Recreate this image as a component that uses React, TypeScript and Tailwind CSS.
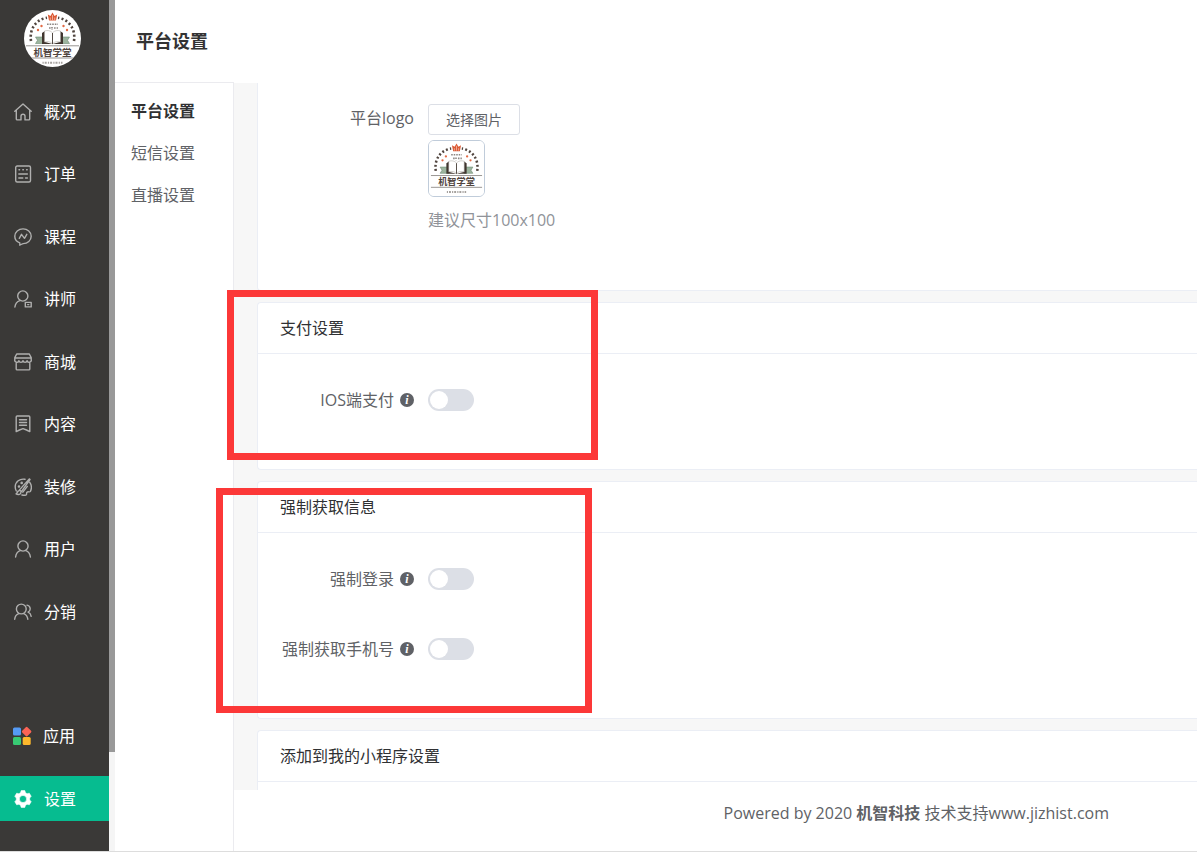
import React, { useState } from "react";

interface NavItem {
  label: string;
  icon: React.ReactNode;
  className?: string;
}

const LineIcon: React.FC<{ children: React.ReactNode }> = ({ children }) => (
  <svg
    viewBox="0 0 18 18"
    className="size-[18px] shrink-0"
    fill="none"
    stroke="#b0b0af"
    strokeWidth="1.4"
    strokeLinecap="round"
    strokeLinejoin="round"
    aria-hidden="true"
  >
    {children}
  </svg>
);

const navItems: NavItem[] = [
  {
    label: "概况",
    icon: (
      <LineIcon>
        <path d="M.8 8.2 9 .9l8.2 7.300M2.300 7.300v8.600c0 .6.4 1 1 1h3.700v-3.600a2 2 0 0 1 4 0v3.600h3.700c.6 0 1-.4 1-1V7.300" />
      </LineIcon>
    ),
  },
  {
    label: "订单",
    icon: (
      <LineIcon>
        <rect x="1.700" y="1" width="14.800" height="16" rx="1.500" />
        <path d="M5 4.800h.6M8.800 4.800h.6M12.600 4.800h.6M4.800 9h8.600M4.800 13h4M11.500 13h1.900" />
      </LineIcon>
    ),
  },
  {
    label: "课程",
    icon: (
      <LineIcon>
        <path d="M5.800 17.200v-2.300C2.800 13.800.8 11.300.8 8.300.8 4.200 4.500.9 9 .9s8.200 3.300 8.200 7.400-3.600 7.300-8 7.300c-.9 0-1.800 1-3.400 1.600Z" />
        <path d="m5.300 10.300 2.200-4 3 4 2.300-4" />
      </LineIcon>
    ),
  },
  {
    label: "讲师",
    icon: (
      <LineIcon>
        <circle cx="8.800" cy="6" r="5.100" />
        <path d="M.9 17c.4-3.200 2.200-5.400 5-6.300" />
        <rect x="11.300" y="12.400" width="5.900" height="4.500" />
        <path d="M13.700 14.600h1.100" />
      </LineIcon>
    ),
  },
  {
    label: "商城",
    icon: (
      <LineIcon>
        <path d="M2.700 1h12.600l1.900 3.600v2.100a2.100 2.100 0 0 1-4.100 1 2.100 2.100 0 0 1-4.100 0 2.100 2.100 0 0 1-4.100 0 2.100 2.100 0 0 1-4.100-1V4.600L2.700 1ZM1 5h16M2.200 10.500v5.400c0 .6.4 1 1 1h11.600c.6 0 1-.4 1-1v-5.400" />
      </LineIcon>
    ),
  },
  {
    label: "内容",
    icon: (
      <LineIcon>
        <path d="M3.200 1h11.600c.6 0 1 .4 1 1v14.600L12.500 15 9 13.600 5.500 15l-3.300 1.600V2c0-.6.4-1 1-1Z" />
        <path d="M5.500 4.700h7M5.500 7.500h7M5.500 10.300h7" />
      </LineIcon>
    ),
  },
  {
    label: "装修",
    icon: (
      <LineIcon>
        <path d="M11 1.300C5.800.2 1.300 3.900 1.200 8.800c0 1.700.4 3 1.100 4.200M15.600 4.200c2.200 3 2 6.700.8 9.200-.8 1.200-2.200-.2-3.300.7-1.300 1 .4 2.500-1.200 3-1.300.3-2.600.2-4-.1" />
        <path d="m15.300.9-9.800 11 1.900 1.700L16 1.500l-.7-.6ZM5 12.700c-1.800.2-1.200 2.200-2.900 3.200 2.100 1.300 5.100.6 4.800-2M8.900 14.200l4.400-5.800" />
        <circle cx="5" cy="8.500" r=".6" />
        <circle cx="7.700" cy="4.900" r=".6" />
      </LineIcon>
    ),
  },
  {
    label: "用户",
    icon: (
      <LineIcon>
        <circle cx="9" cy="6" r="5.100" />
        <path d="M1.600 17c.4-3.200 2-5.400 4.600-6.300M11.800 10.700c2.600.9 4.200 3.100 4.600 6.300" />
      </LineIcon>
    ),
  },
  {
    label: "分销",
    icon: (
      <LineIcon>
        <circle cx="7.300" cy="6" r="4.900" />
        <path d="M.7 16.200c.3-2.800 1.700-4.600 4-5.500M9.800 10.700c2.300.9 3.600 2.700 4 5.500M13 2.100c3.600.6 4.300 5.300 1.100 7 1.700.7 2.700 2 3.100 4.200" />
      </LineIcon>
    ),
  },
  {
    label: "应用",
    className: "mt-[62px]",
    icon: (
      <svg viewBox="0 0 18 18" className="-ml-px size-[18px] shrink-0 overflow-visible" aria-hidden="true">
        <rect x="0" y="0.500" width="8" height="8" rx="1.500" fill="#559bf5" />
        <rect x="10" y="0.900" width="7.400" height="7.400" rx="1.200" fill="#fb6355" transform="rotate(45 13.700 4.500)" />
        <rect x="0" y="10" width="8" height="8" rx="1.500" fill="#38ca73" />
        <rect x="9.700" y="10" width="8" height="8" rx="1.500" fill="#fcb82c" />
      </svg>
    ),
  },
  {
    label: "设置",
    icon: (
      <svg viewBox="0 0 18 18" className="size-[18px] shrink-0" aria-hidden="true">
        <path
          fill="#fff"
          fillRule="evenodd"
          d="M7.200.6h3.600l.7 2.200 1.600.9 2.200-.5 1.900 3.100L15.700 8v2l1.500 1.700-1.900 3.100-2.200-.5-1.600.9-.7 2.200H7.200l-.7-2.200-1.600-.9-2.200.5-1.900-3.100L2.300 10V8L.8 6.300l1.900-3.100 2.200.5 1.600-.9L7.200.6ZM9 5.400a3.600 3.600 0 1 0 0 7.200 3.600 3.600 0 0 0 0-7.200Z"
          stroke="#fff"
          strokeWidth=".6"
          strokeLinejoin="round"
        />
      </svg>
    ),
  },
];

const Logo = () => (
  <svg viewBox="0 0 57 57" className="block size-full" role="img" aria-label="机智学堂">
    <rect width="57" height="57" fill="#fff" />
    <path d="m23.800 4.500 2.700 1.500 2-3.500 2 3.500 2.700-1.500-1.200 6h-7l-1.200-6Z" fill="#dc5a35" />
    <path d="M28.500 5v5M26.300 7.500v2.500M30.700 7.500v2.500" stroke="#fff" strokeWidth=".5" />
    <path
      d="M7 31C5 17 14 9 23 7.800M50 31C52 17 43 9 34 7.800"
      fill="none"
      stroke="#50443e"
      strokeWidth="2.600"
      strokeDasharray="2 2.300"
    />
    <g fill="#e26a45">
      <circle cx="17.500" cy="16" r="1.200" />
      <circle cx="14" cy="20" r="1.200" />
      <circle cx="39.500" cy="16" r="1.200" />
      <circle cx="43" cy="20" r="1.200" />
    </g>
    <path d="M23 14.300h11M25 18h2M28 17v3M30 18h4" stroke="#8a8582" strokeWidth="1.600" strokeDasharray="1.600 1" />
    <path d="M11.500 27h9v6.500h-9l2-3.200-2-3.300ZM45.500 27h-9v6.500h9l-2-3.200 2-3.300Z" fill="#9db59f" stroke="#6d8a72" strokeWidth=".6" />
    <path d="M18 34V23l3-2v11l7.500 2 7.500-2V21l3 2v11H18Z" fill="#40362f" />
    <path d="M20.500 21c3-1 6-.5 8 1.800 2-2.300 5-2.800 8-1.800v11c-3-1-6-.5-8 1.800-2-2.300-5-2.800-8-1.800V21Z" fill="#fff" stroke="#a8a29d" strokeWidth=".5" />
    <path d="M28.500 23v11" stroke="#40362f" strokeWidth=".9" />
    <path d="M2 35.800h53M2 48h53" stroke="#8b8784" strokeWidth=".9" />
    <text x="28.500" y="45.500" textAnchor="middle" fontSize="9.500" fontWeight="700" fill="#51453f">
      机智学堂
    </text>
    <path d="M18.500 52.800h20" stroke="#a5a19e" strokeWidth="2" strokeDasharray="1.200 1 2 1.200" />
  </svg>
);

const InfoIcon = () => (
  <span className="flex size-3.5 shrink-0 items-center justify-center rounded-full bg-[#5f6166] font-['Liberation_Serif',serif] text-xs leading-none font-bold text-white italic">
    i
  </span>
);

const SwitchRow: React.FC<{ id: string; label: string }> = ({ id, label }) => {
  const [checked, setChecked] = useState(false);
  return (
    <div className="flex h-[70px] items-center gap-3.5">
      <label htmlFor={id} className="flex w-[156px] items-center justify-end gap-1.5 whitespace-nowrap">
        {label}
        <InfoIcon />
      </label>
      <input
        id={id}
        type="checkbox"
        role="switch"
        checked={checked}
        onChange={(e) => setChecked(e.target.checked)}
        className="flex h-[22px] w-[46px] cursor-pointer appearance-none items-center rounded-full bg-[#dcdfe6] px-0.5 before:size-[18px] before:rounded-full before:bg-white checked:justify-end checked:bg-[#06bc90]"
      />
    </div>
  );
};

const Card: React.FC<{ title: string; children?: React.ReactNode }> = ({ title, children }) => (
  <section className="shrink-0 rounded-l border border-r-0 border-[#ebeef5] bg-white">
    <h2 className="flex h-[51px] items-center border-b border-[#ebeef5] px-[22px] text-[#303133]">{title}</h2>
    <div className="pt-[11px] pb-[34px]">{children}</div>
  </section>
);

const App: React.FC = () => {
  const [active, setActive] = useState("设置");

  return (
    <div className="relative flex h-screen overflow-hidden border-b border-[#dddddd] bg-white font-['Open_Sans','Noto_Sans_CJK_SC',sans-serif] text-base text-[#606266]">
      <aside className="flex w-[109px] shrink-0 flex-col bg-[#3a3937] pt-2.5 pb-[30px]">
        <div className="mx-6 size-[57px] shrink-0 overflow-hidden rounded-full">
          <Logo />
        </div>
        <nav className="mt-[22px] flex flex-1 flex-col justify-between">
          {navItems.map((item) => (
            <button
              key={item.label}
              type="button"
              onClick={() => setActive(item.label)}
              className={`flex h-[45px] items-center gap-3 pl-3.5 text-white ${item.className ?? ""} ${
                active === item.label ? "bg-[#06bc90]" : ""
              }`}
            >
              {item.icon}
              <span>{item.label}</span>
            </button>
          ))}
        </nav>
      </aside>

      {/* scroll track */}
      <div className="w-1.5 shrink-0 bg-[#f5f5f5]">
        <div className="h-[752px] bg-[#999999]" />
      </div>

      <div className="flex min-w-0 flex-1 flex-col">
        <header className="flex h-[82px] shrink-0 items-center pl-[21px]">
          <h1 className="text-lg font-bold text-[#333333]">平台设置</h1>
        </header>

        <div className="flex min-h-0 flex-1">
          <nav className="flex w-[119px] shrink-0 flex-col border-t border-r border-[#ebebef] pt-[7px] pl-4">
            <a href="#platform" className="flex h-[42px] items-center font-bold text-[#303133]">
              平台设置
            </a>
            <a href="#sms" className="flex h-[42px] items-center">
              短信设置
            </a>
            <a href="#live" className="flex h-[42px] items-center">
              直播设置
            </a>
          </nav>

          <div className="flex min-w-0 flex-1 flex-col">
            <main className="mt-px flex min-h-0 flex-1 flex-col gap-[11px] overflow-hidden bg-[#f7f7f7] pl-[23px]">
              <section className="flex shrink-0 gap-3.5 rounded-bl border-b border-l border-[#ebeef5] bg-white pt-[21px] pb-[58px]">
                <label htmlFor="logo" className="flex h-7 w-[156px] items-center justify-end">
                  平台logo
                </label>
                <div>
                  <button
                    id="logo"
                    type="button"
                    className="block h-[31px] rounded-[3px] border border-[#dcdfe6] px-[17px] text-sm"
                  >
                    选择图片
                  </button>
                  <div className="mt-[5px] size-[57px] overflow-hidden rounded-md border border-[#c0ccda]">
                    <Logo />
                  </div>
                  <p className="mt-[11px] text-[#909399]">建议尺寸100x100</p>
                </div>
              </section>

              <Card title="支付设置">
                <SwitchRow id="ios-pay" label="IOS端支付" />
              </Card>
              <Card title="强制获取信息">
                <SwitchRow id="force-login" label="强制登录" />
                <SwitchRow id="force-phone" label="强制获取手机号" />
              </Card>
              <Card title="添加到我的小程序设置" />
            </main>

            <footer className="flex h-[61px] shrink-0 items-center justify-end pr-[88px] pb-4">
              <p>
                Powered by 2020 <strong>机智科技</strong> 技术支持www.jizhist.com
              </p>
            </footer>
          </div>
        </div>
      </div>

      {/* highlight frames */}
      <div className="pointer-events-none absolute top-[290px] left-[227px] h-[170px] w-[371px] border-[7px] border-[#fc3838]" />
      <div className="pointer-events-none absolute top-[488px] left-[216px] h-[225px] w-[376px] border-[7px] border-[#fc3838]" />
    </div>
  );
};

export default App;
